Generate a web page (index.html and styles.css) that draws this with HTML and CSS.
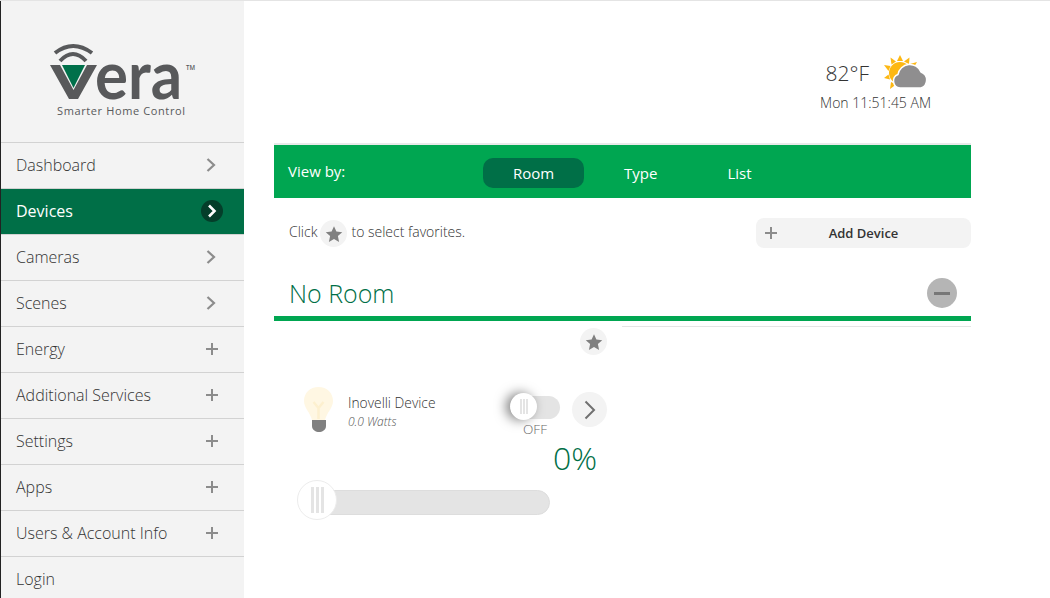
FILE: index.html
```html
<!DOCTYPE html>
<html lang="en">
<head>
<meta charset="utf-8">
<title>Vera</title>
<link rel="stylesheet" href="styles.css">
</head>
<body>
<div class="app">
  <aside class="sidebar">
    <div class="logo">
      <svg class="logo-svg" width="150" height="76" viewBox="0 0 150 76">
        <path d="M5 9 Q23 -5 42 9" fill="none" stroke="#58595b" stroke-width="4"/>
        <path d="M10 17 Q23 3 36 17" fill="none" stroke="#58595b" stroke-width="4"/>
        <path d="M0 21 H10 L23.500 46 L37 21 H47 L28 55 H19 Z" fill="#58595b"/>
        <path d="M12 21 H35 L23.500 44 Z" fill="#00704a"/>
        <text class="logo-word" x="45" y="55" textLength="87" lengthAdjust="spacingAndGlyphs">era</text>
        <text class="logo-tm" x="136" y="26" textLength="9" lengthAdjust="spacingAndGlyphs">TM</text>
        <text class="logo-tag" x="7" y="71" textLength="128">Smarter Home Control</text>
      </svg>
    </div>
    <nav class="nav">
      <a class="nav-item"><span>Dashboard</span><svg class="ico" width="12" height="16" viewBox="0 0 12 16"><path d="M1.500 2 L8 8 L1.500 14" fill="none" stroke="#8c8c8c" stroke-width="2.200"/></svg></a>
      <a class="nav-item active"><span>Devices</span><span class="nav-badge"><svg width="12" height="14" viewBox="0 0 12 14"><path d="M3 1.500 L8.500 7 L3 12.500" fill="none" stroke="#fff" stroke-width="2.600"/></svg></span></a>
      <a class="nav-item"><span>Cameras</span><svg class="ico" width="12" height="16" viewBox="0 0 12 16"><path d="M1.500 2 L8 8 L1.500 14" fill="none" stroke="#8c8c8c" stroke-width="2.200"/></svg></a>
      <a class="nav-item"><span>Scenes</span><svg class="ico" width="12" height="16" viewBox="0 0 12 16"><path d="M1.500 2 L8 8 L1.500 14" fill="none" stroke="#8c8c8c" stroke-width="2.200"/></svg></a>
      <a class="nav-item"><span>Energy</span><svg class="ico" width="12" height="12" viewBox="0 0 12 12"><path d="M6 0 V12 M0 6 H12" stroke="#8c8c8c" stroke-width="2"/></svg></a>
      <a class="nav-item"><span>Additional Services</span><svg class="ico" width="12" height="12" viewBox="0 0 12 12"><path d="M6 0 V12 M0 6 H12" stroke="#8c8c8c" stroke-width="2"/></svg></a>
      <a class="nav-item"><span>Settings</span><svg class="ico" width="12" height="12" viewBox="0 0 12 12"><path d="M6 0 V12 M0 6 H12" stroke="#8c8c8c" stroke-width="2"/></svg></a>
      <a class="nav-item"><span>Apps</span><svg class="ico" width="12" height="12" viewBox="0 0 12 12"><path d="M6 0 V12 M0 6 H12" stroke="#8c8c8c" stroke-width="2"/></svg></a>
      <a class="nav-item"><span>Users &amp; Account Info</span><svg class="ico" width="12" height="12" viewBox="0 0 12 12"><path d="M6 0 V12 M0 6 H12" stroke="#8c8c8c" stroke-width="2"/></svg></a>
      <a class="nav-item"><span>Login</span></a>
    </nav>
  </aside>
  <main class="main">
    <header class="top">
      <div class="weather">
        <div class="weather-row">
          <span class="temp">82°F</span>
          <svg class="wx" width="46" height="36" viewBox="0 0 46 36">
            <g fill="#fdb813">
              <circle cx="16" cy="18" r="11"/>
              <path d="M16 0 L19 6 L13 6 Z"/>
              <path d="M25.500 2.500 L25 9 L20 6.500 Z"/>
              <path d="M6.500 2.500 L12 6.500 L7.500 9.500 Z"/>
              <path d="M0 10 L6.500 11 L4.500 16 Z"/>
              <path d="M0 23 L4.500 19.500 L6 24.500 Z"/>
              <path d="M6 34 L7 27 L12 29.500 Z"/>
              <path d="M33 7 L29.500 13 L26 9 Z"/>
            </g>
            <path d="M16 33 A7 7 0 0 1 14 19.500 A12 12 0 0 1 37 17 A8.500 8.500 0 0 1 37 33 Z" fill="#8f8e8f" stroke="#fff" stroke-width="1.500"/>
          </svg>
        </div>
        <div class="clock">Mon 11:51:45 AM</div>
      </div>
    </header>
    <div class="viewbar">
      <span class="view-label">View by:</span>
      <div class="tabs">
        <span class="tab tab-active">Room</span>
        <span class="tab">Type</span>
        <span class="tab">List</span>
      </div>
    </div>
    <div class="hint-row">
      <div class="hint"><span class="hint-text">Click</span>
        <span class="star-btn hint-star"><svg width="18" height="18" viewBox="0 0 24 24"><path d="M12 1.500 L15.200 8.700 L23 9.500 L17.200 14.800 L18.800 22.500 L12 18.600 L5.200 22.500 L6.800 14.800 L1 9.500 L8.800 8.700 Z" fill="#808080"/></svg></span>
        <span class="hint-text">to select favorites.</span></div>
      <button class="add-btn"><svg width="12" height="12" viewBox="0 0 12 12"><path d="M6 0 V12 M0 6 H12" stroke="#8c8c8c" stroke-width="2"/></svg><span>Add Device</span></button>
    </div>
    <div class="room-head">
      <h2 class="room-title">No Room</h2>
      <span class="collapse"><i></i></span>
    </div>
    <div class="room-body">
      <section class="card">
        <div class="card-fav">
          <span class="star-btn"><svg width="18" height="18" viewBox="0 0 24 24"><path d="M12 1.500 L15.200 8.700 L23 9.500 L17.200 14.800 L18.800 22.500 L12 18.600 L5.200 22.500 L6.800 14.800 L1 9.500 L8.800 8.700 Z" fill="#808080"/></svg></span>
        </div>
        <div class="device">
          <svg class="bulb" width="29" height="46" viewBox="0 0 29 46">
            <path d="M14.500 0 C6 0 0 6 0 14 C0 21 6 25 8 33 H21 C23 25 29 21 29 14 C29 6 23 0 14.500 0 Z" fill="#fff7e3"/>
            <path d="M14.500 32 V21 M9.500 15 L14.500 21 L19.500 15" fill="none" stroke="#fdf0cf" stroke-width="2.500"/>
            <path d="M8 33 H22 V39 C22 43 18 45 15 45 C12 45 8 43 8 39 Z" fill="#808080"/>
          </svg>
          <div class="device-info">
            <div class="device-name">Inovelli Device</div>
            <div class="device-watts">0.0 Watts</div>
          </div>
          <div class="switch-col">
            <div class="switch"><span class="switch-knob"><i></i><i></i><i></i></span></div>
            <div class="switch-label">OFF</div>
          </div>
          <span class="go-btn"><svg width="14" height="20" viewBox="0 0 14 20"><path d="M2.500 1.500 L11 10 L2.500 18.500" fill="none" stroke="#707070" stroke-width="2"/></svg></span>
        </div>
        <div class="percent">0%</div>
        <div class="slider"><span class="slider-knob"><i></i><i></i><i></i></span></div>
      </section>
      <div class="rest"></div>
    </div>
  </main>
</div>
</body>
</html>
```
FILE: styles.css
```css
* { box-sizing: border-box; }
html, body { margin: 0; padding: 0; height: 100%; overflow: hidden; background: #fff; }
body { font-family: "Open Sans", "Liberation Sans", sans-serif; color: #333; border-top: 1px solid #e4e4e4; }
.app { display: flex; height: 597px; overflow: hidden; }

.sidebar { width: 244px; flex: none; background: #f3f3f3; border-left: 1px solid #222; display: flex; flex-direction: column; overflow: hidden; }
.logo { height: 141px; flex: none; padding: 43px 0 0 49px; }
.logo-svg { display: block; overflow: visible; }
.logo-word { font-family: "Lato", sans-serif; font-size: 67px; font-weight: 700; fill: #58595b; }
.logo-tm { font-family: "Open Sans", sans-serif; font-size: 7px; font-weight: 600; fill: #58595b; }
.logo-tag { font-family: "Open Sans", sans-serif; font-size: 11px; font-weight: 400; fill: #58595b; }
.nav { flex: none; }
.nav-item { height: 46px; padding: 0 26px 2px 15px; display: flex; align-items: center; justify-content: space-between; border-top: 1px solid #d2d2d2; font-size: 16px; font-weight: 300; color: #333; }
.nav-item.active { background: #006f47; color: #fff; padding-right: 21px; font-weight: 400; }
.nav-badge { width: 22px; height: 22px; border-radius: 50%; background: #043e2a; display: flex; align-items: center; justify-content: center; }

.main { width: 697px; margin-left: 30px; flex: none; display: flex; flex-direction: column; }
.top { height: 142px; flex: none; padding: 54px 40px 0 0; display: flex; justify-content: flex-end; }
.weather { display: flex; flex-direction: column; align-items: flex-end; }
.weather-row { display: flex; align-items: center; gap: 15px; margin-right: 1px; }
.temp { font-size: 21px; font-weight: 300; color: #333; }
.clock { font-size: 14px; font-weight: 300; color: #333; margin-top: 2px; }

.viewbar { height: 55px; flex: none; background: #00a651; border-top: 2px solid #e9e9e9; padding: 2px 0 0 14px; display: flex; align-items: center; color: #fff; }
.view-label { width: 195px; font-size: 15px; font-weight: 400; margin-top: -3px; }
.tabs { display: flex; align-items: center; }
.tab { font-size: 15px; line-height: 30px; }
.tab:nth-child(2) { padding-left: 40px; }
.tab:nth-child(3) { padding-left: 70px; }
.tab-active { width: 101px; text-align: center; background: #006f47; border-radius: 10px; }

.hint-row { height: 50px; flex: none; margin-top: 20px; display: flex; justify-content: space-between; align-items: flex-start; padding-left: 15px; }
.hint { display: flex; align-items: center; gap: 3px; font-size: 14px; font-weight: 300; color: #333; height: 30px; }
.hint-text { padding-bottom: 3px; }
.star-btn { width: 27px; height: 27px; border-radius: 50%; background: #f3f3f3; display: flex; align-items: center; justify-content: center; }
.hint-star { margin: 1px 1px 0 0; }
.add-btn { width: 215px; height: 30px; border: 0; border-radius: 8px; background: #f3f3f3; display: flex; align-items: center; padding: 0 9px; font-family: inherit; font-size: 13px; font-weight: 600; color: #333; }
.add-btn span { flex: 1; text-align: center; margin: 0 15px 0 3px; }

.room-head { height: 53px; flex: none; border-bottom: 5px solid #00a651; display: flex; align-items: center; justify-content: space-between; padding: 2px 14px 0 15px; }
.room-title { margin: 0; font-size: 25px; font-weight: 300; color: #006f47; }
.collapse { width: 30px; height: 30px; border-radius: 50%; background: #b5b5b5; display: flex; align-items: center; justify-content: center; margin-top: 0; }
.collapse i { display: block; width: 16px; height: 3px; background: #777; }

.room-body { display: flex; }
.card { width: 348px; flex: none; padding-top: 7px; display: flex; flex-direction: column; }
.card-fav { display: flex; justify-content: flex-end; padding-right: 15px; }
.rest { flex: 1; height: 6px; border-bottom: 1px solid #e4e4e4; }
.device { display: flex; margin-top: 32px; padding-left: 30px; height: 60px; }
.bulb { flex: none; }
.device-info { margin-left: 15px; width: 162px; padding-top: 6px; }
.device-name { font-size: 13.800px; font-weight: 300; line-height: 20px; color: #333; }
.device-watts { font-size: 12px; font-style: italic; font-weight: 300; line-height: 18px; color: #555; }
.switch-col { width: 50px; padding-top: 9px; }
.switch { width: 50px; height: 23px; border-radius: 12px; background: #e4e4e4; position: relative; }
.switch-knob { position: absolute; left: 0; top: -3px; width: 27px; height: 27px; border-radius: 50%; background: #fff; box-shadow: -4px 0 12px rgba(0,0,0,.5); display: flex; align-items: center; justify-content: center; gap: 1px; }
.switch-knob i { width: 2px; height: 15px; background: #e4e4e4; }
.switch-label { font-size: 13.500px; line-height: 16px; font-weight: 300; color: #666; text-align: center; margin-top: 2px; }
.go-btn { width: 35px; height: 35px; border-radius: 50%; background: #f3f3f3; display: flex; align-items: center; justify-content: center; margin: 5px 0 0 12px; }
.percent { font-size: 32px; font-weight: 300; color: #006f47; text-align: right; padding-right: 25px; line-height: 44px; margin-top: -11px; }
.slider { width: 240px; height: 25px; margin: 10px 0 0 36px; background: #e4e4e4; border-radius: 13px; position: relative; border: 1px solid #ddd; }
.slider-knob { position: absolute; left: -14px; top: -11px; width: 40px; height: 40px; border-radius: 50%; background: #fff; border: 1px solid #ececec; display: flex; align-items: center; justify-content: center; gap: 2px; }
.slider-knob i { width: 3px; height: 26px; background: #e4e4e4; }
```
